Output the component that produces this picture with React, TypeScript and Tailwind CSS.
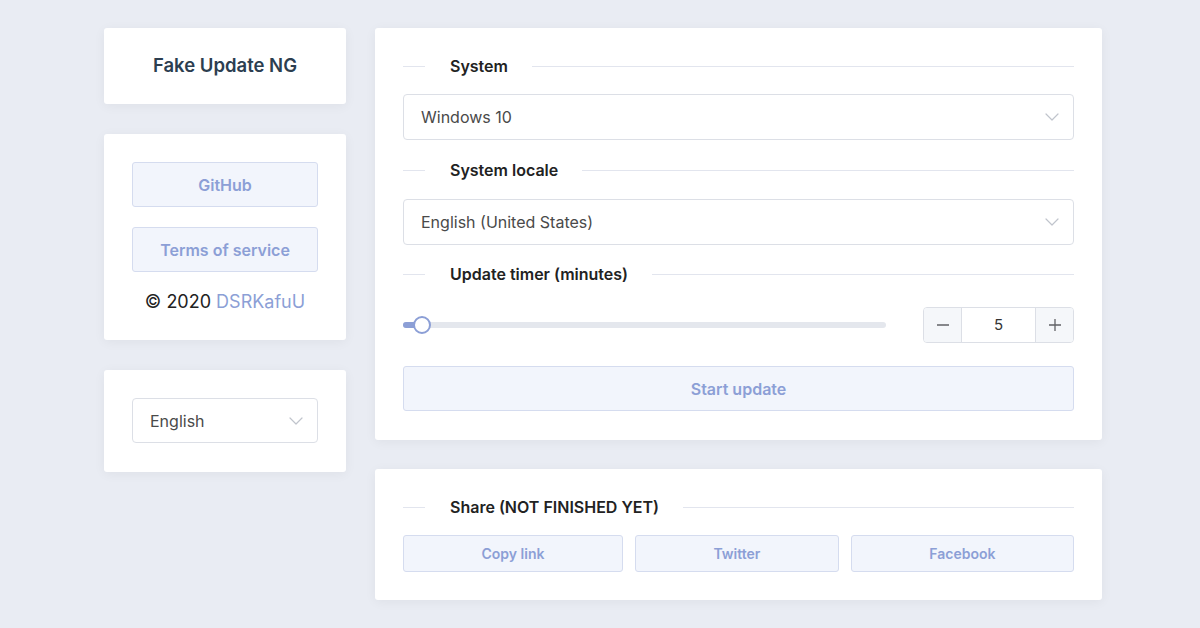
import React from "react";

const font = { fontFamily: "Inter, 'Noto Sans', sans-serif" };

function Chevron() {
  return (
    <svg width="14" height="8" viewBox="0 0 14 8" fill="none" className="shrink-0">
      <path d="M1 1l6 6 6-6" stroke="#c0c4cc" strokeWidth="1.2" strokeLinecap="round" strokeLinejoin="round" />
    </svg>
  );
}

function Select({ value, h = "h-[45px]" }: { value: string; h?: string }) {
  return (
    <div className={"flex items-center justify-between rounded-[4px] border border-[#dcdfe6] bg-white pl-[17px] pr-[14px] " + h}>
      <span className="text-[16px] text-[#4a4a4a]">{value}</span>
      <Chevron />
    </div>
  );
}

function Heading({ children }: { children: React.ReactNode }) {
  return (
    <div className="flex h-[20px] items-center">
      <div className="h-px w-[22px] bg-[#e2e5ee]" />
      <span className="pl-[25px] pr-6 text-[16px] font-semibold leading-[20px] text-[#222]">{children}</span>
      <div className="h-px flex-1 bg-[#e2e5ee]" />
    </div>
  );
}

function Btn({ children, className = "" }: { children: React.ReactNode; className?: string }) {
  return (
    <div
      className={
        "flex items-center justify-center rounded-[3px] border border-[#d5dcef] bg-[#f2f5fc] font-semibold text-[#8c9fd6] " +
        className
      }
    >
      {children}
    </div>
  );
}

export default function App() {
  return (
    <div style={font} className="min-h-[628px] w-[1200px] bg-[#e9ecf3]">
      <div className="flex gap-[29px] pl-[104px] pt-[28px]">
        <div className="flex w-[242px] flex-col gap-[30px]">
          <div className="flex h-[76px] items-center justify-center rounded-[3px] bg-white shadow-[0_2px_12px_rgba(0,0,0,0.05)]">
            <span className="text-[18.5px] font-semibold text-[#2c3e50]">Fake Update NG</span>
          </div>
          <div className="flex flex-col rounded-[3px] bg-white px-7 pb-[26px] pt-7 shadow-[0_2px_12px_rgba(0,0,0,0.05)]">
            <Btn className="h-[45px] text-[16px]">GitHub</Btn>
            <Btn className="mt-[20px] h-[45px] text-[16px]">Terms of service</Btn>
            <div className="mt-[18px] text-center text-[18px] leading-[24px] text-[#222]">
              © 2020 <span className="text-[#8c9fd6]">DSRKafuU</span>
            </div>
          </div>
          <div className="rounded-[3px] bg-white px-7 pb-[29px] pt-7 shadow-[0_2px_12px_rgba(0,0,0,0.05)]">
            <Select value="English" />
          </div>
        </div>
        <div className="flex w-[727px] flex-col gap-[29px]">
          <div className="rounded-[3px] bg-white px-7 pb-[29px] pt-7 shadow-[0_2px_12px_rgba(0,0,0,0.05)]">
            <Heading>System</Heading>
            <div className="mt-[18px]">
              <Select value="Windows 10" h="h-[46px]" />
            </div>
            <div className="mt-[20px]">
              <Heading>System locale</Heading>
            </div>
            <div className="mt-[19px]">
              <Select value="English (United States)" h="h-[46px]" />
            </div>
            <div className="mt-[19px]">
              <Heading>Update timer (minutes)</Heading>
            </div>
            <div className="mt-[23px] flex h-[36px] items-center justify-between">
              <div className="relative h-[6px] w-[483px] rounded-full bg-[#e4e7ed]">
                <div className="absolute left-0 top-0 h-[6px] w-[20px] rounded-full bg-[#8c9fd6]" />
                <div className="absolute left-[10px] top-[-6px] h-[18px] w-[18px] rounded-full border-2 border-[#8c9fd6] bg-white" />
              </div>
              <div className="flex h-[36px] w-[151px] overflow-hidden rounded-[4px] border border-[#dcdfe6]">
                <div className="flex w-[38px] items-center justify-center border-r border-[#dcdfe6] bg-[#f5f7fa] text-[#606266]">
                  <svg width="14" height="14" viewBox="0 0 14 14"><path d="M1 7h12" stroke="#606266" strokeWidth="1.3" /></svg>
                </div>
                <div className="flex flex-1 items-center justify-center bg-white text-[15px] text-[#333]">5</div>
                <div className="flex w-[38px] items-center justify-center border-l border-[#dcdfe6] bg-[#f5f7fa]">
                  <svg width="14" height="14" viewBox="0 0 14 14"><path d="M1 7h12M7 1v12" stroke="#606266" strokeWidth="1.3" /></svg>
                </div>
              </div>
            </div>
            <Btn className="mt-[23px] h-[45px] text-[16px]">Start update</Btn>
          </div>
          <div className="rounded-[3px] bg-white px-7 pb-7 pt-7 shadow-[0_2px_12px_rgba(0,0,0,0.05)]">
            <Heading>Share (NOT FINISHED YET)</Heading>
            <div className="mt-[18px] flex gap-3">
              <Btn className="h-[37px] flex-auto text-[14px]">Copy link</Btn>
              <Btn className="h-[37px] flex-auto text-[14px]">Twitter</Btn>
              <Btn className="h-[37px] flex-auto text-[14px]">Facebook</Btn>
            </div>
          </div>
        </div>
      </div>
    </div>
  );
}
